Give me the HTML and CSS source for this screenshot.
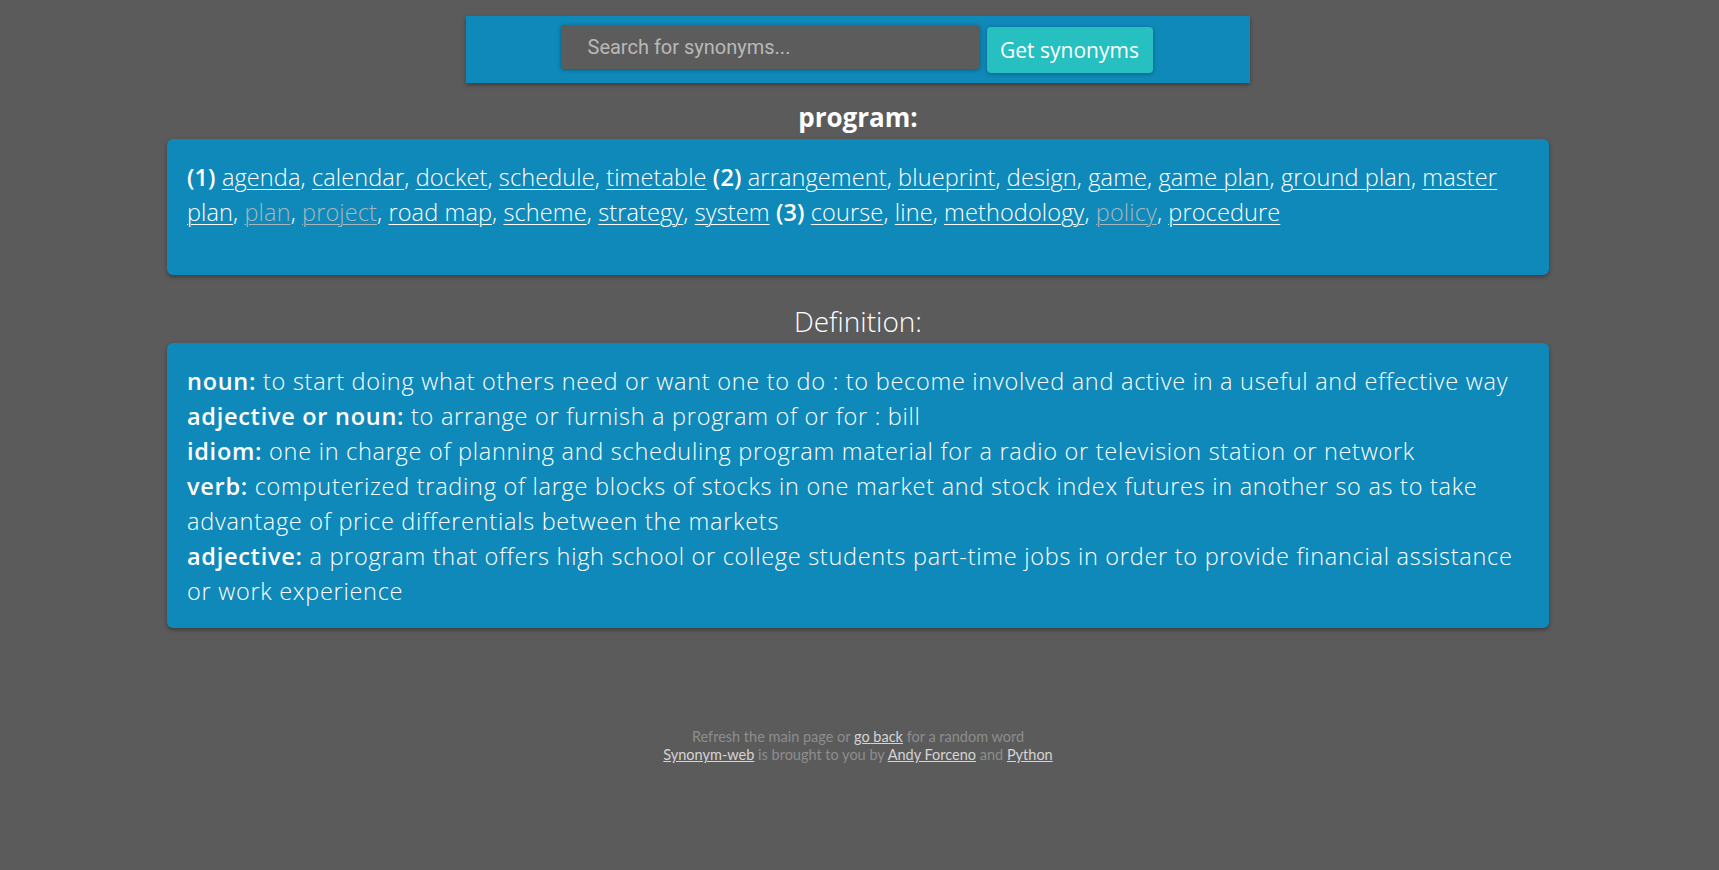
FILE: index.html
```html
<!DOCTYPE html>
<html lang="en">
<head>
<meta charset="utf-8">
<title>Synonym-web</title>
<link rel="stylesheet" href="styles.css">
</head>
<body>
<header class="topbar">
  <form class="search">
    <input class="search-input" type="text" placeholder="Search for synonyms...">
    <button class="search-btn" type="button">Get synonyms</button>
  </form>
</header>
<main class="content">
  <h2 class="word-title">program:</h2>
  <section class="card synonyms">
    <p class="syn-text"><b>(1)</b> <a href="#">agenda</a>, <a href="#">calendar</a>, <a href="#">docket</a>, <a href="#">schedule</a>, <a href="#">timetable</a> <b>(2)</b> <a href="#">arrangement</a>, <a href="#">blueprint</a>, <a href="#">design</a>, <a href="#">game</a>, <a href="#">game plan</a>, <a href="#">ground plan</a>, <a href="#">master plan</a>, <a href="#" class="dim">plan</a>, <a href="#" class="dim">project</a>, <a href="#">road map</a>, <a href="#">scheme</a>, <a href="#">strategy</a>, <a href="#">system</a> <b>(3)</b> <a href="#">course</a>, <a href="#">line</a>, <a href="#">methodology</a>, <a href="#" class="dim">policy</a>, <a href="#">procedure</a></p>
  </section>
  <h2 class="def-title">Definition:</h2>
  <section class="card definitions">
    <p class="def"><b>noun:</b> to start doing what others need or want one to do : to become involved and active in a useful and effective way</p>
    <p class="def"><b>adjective or noun:</b> to arrange or furnish a program of or for : bill</p>
    <p class="def"><b>idiom:</b> one in charge of planning and scheduling program material for a radio or television station or network</p>
    <p class="def"><b>verb:</b> computerized trading of large blocks of stocks in one market and stock index futures in another so as to take advantage of price differentials between the markets</p>
    <p class="def"><b>adjective:</b> a program that offers high school or college students part-time jobs in order to provide financial assistance or work experience</p>
  </section>
</main>
<footer class="footer">
  <p>Refresh the main page or <a href="#">go back</a> for a random word</p>
  <p><a href="#">Synonym-web</a> is brought to you by <a href="#">Andy Forceno</a> and <a href="#">Python</a></p>
</footer>
</body>
</html>
```

FILE: styles.css
```css
* { box-sizing: border-box; }

body {
  margin: 0;
  padding-right: 3px;
  background: #5b5b5b;
  color: #ffffff;
  font-family: "Open Sans", "Lato", sans-serif;
  min-height: 870px;
}

.topbar {
  width: 784px;
  height: 67px;
  margin: 16px auto 0;
  background: #0f89b9;
  box-shadow: 0 2px 4px rgba(0, 0, 0, 0.35);
  display: flex;
  justify-content: center;
  padding-top: 9px;
}

.search {
  display: flex;
  align-items: flex-start;
  gap: 7px;
  margin: 0 0 0 -3px;
}

.search-input {
  width: 419px;
  height: 44px;
  border: none;
  border-radius: 4px;
  background: #5c5c5c;
  box-shadow: 0 1px 4px rgba(0, 0, 0, 0.35);
  padding: 0 27px;
  font-family: "Roboto", sans-serif;
  font-size: 20px;
  color: #e0e0e0;
  outline: none;
}

.search-input::placeholder {
  color: #b9b9b9;
}

.search-btn {
  margin-top: 2px;
  width: 166px;
  height: 46px;
  padding: 0;
  border: none;
  border-radius: 4px;
  background: #26c0c0;
  box-shadow: 0 1px 4px rgba(0, 0, 0, 0.3);
  color: #ffffff;
  font-family: "Open Sans", sans-serif;
  font-size: 21px;
  font-weight: 400;
}

.content {
  width: 1382px;
  margin: 0 auto;
}

.word-title,
.def-title {
  text-align: center;
  line-height: 32px;
  margin: 0;
}

.word-title {
  font-size: 26px;
  font-weight: 700;
  margin: 18px 0 6px;
}

.def-title {
  font-size: 28px;
  font-weight: 300;
  margin: 30px 0 6px;
}

.card {
  background: #0f89b9;
  border-radius: 6px;
  box-shadow: 0 2px 4px rgba(0, 0, 0, 0.35);
  padding: 21px 20px 19px;
  font-size: 23.5px;
  font-weight: 300;
  line-height: 35px;
}

.synonyms {
  padding-bottom: 45px;
  letter-spacing: 0.12px;
}

.definitions {
  letter-spacing: 0.72px;
}

.card p {
  margin: 0;
}

.card b {
  font-weight: 600;
}

.card a {
  color: #ffffff;
  text-decoration: underline;
  text-decoration-thickness: 1px;
  text-underline-offset: 3px;
}

.card a.dim {
  color: #a6b6be;
}

.footer {
  margin-top: 100px;
  text-align: center;
  font-family: "Lato", sans-serif;
  font-size: 14.5px;
  line-height: 18px;
  color: #8d8d8d;
}

.footer p {
  margin: 0;
}

.footer a {
  color: #d4d4d4;
  text-decoration: underline;
}
```
